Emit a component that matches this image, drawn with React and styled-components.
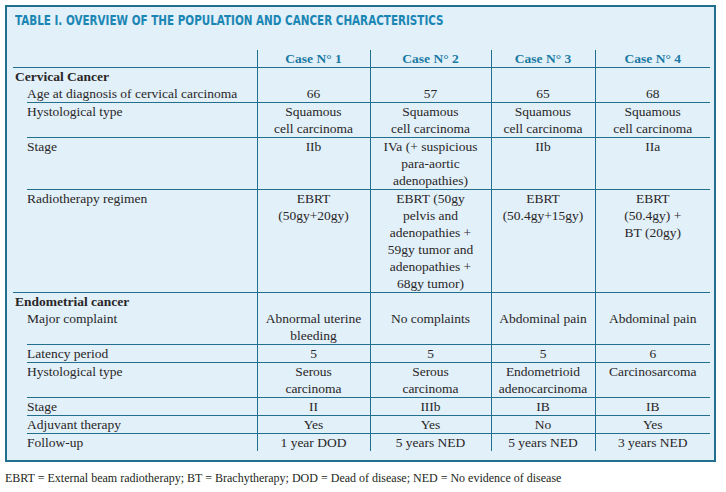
import React from "react";
import styled, { createGlobalStyle, css } from "styled-components";

const LINE = "#22708e";

const GlobalStyle = createGlobalStyle`
  html, body {
    margin: 0;
    padding: 0;
    background: #ffffff;
  }
  body {
    font-family: "Liberation Serif", "DejaVu Serif", serif;
    color: #2a2627;
  }
`;

const Panel = styled.div`
  margin: 5px 0 0 5px;
  width: 711px;
  height: 457px;
  box-sizing: border-box;
  border: 2px solid ${LINE};
  background: #e1f0f9;
  padding: 5px 4px 0 6px;
`;

const Title = styled.h1`
  margin: 0;
  height: 38px;
  padding-left: 2px;
  font-family: "DejaVu Sans Condensed", "Liberation Sans", sans-serif;
  font-weight: 700;
  font-size: 14px;
  line-height: 16px;
  color: #1b86b4;
  white-space: nowrap;

  span {
    display: inline-block;
    transform: scaleX(0.825);
    transform-origin: 0 50%;
  }
`;

const Table = styled.table`
  border-collapse: collapse;
  table-layout: fixed;
  width: 697px;
  font-size: 13.5px;
  line-height: 17px;

  td, th {
    padding: 0;
    vertical-align: top;
  }
`;

const HeadCell = styled.th`
  text-align: center;
  font-weight: 700;
  color: #1b7aa3;
  border-left: 1px solid ${LINE};
  border-bottom: 1px solid ${LINE};
  height: 17px;
`;

const Corner = styled.th`
  border-bottom: 1px solid ${LINE};
`;

const Label = styled.td`
  text-align: left;
  white-space: nowrap;
  padding-left: ${(p) => (p.$section ? "2px" : "14px")} !important;
  ${(p) => p.$section && css`
    font-weight: 700;
    color: #2a2627;
  `}
  ${(p) => p.$line === "indent" && css`
    background: linear-gradient(${LINE}, ${LINE}) no-repeat 14px 100% / calc(100% - 14px) 1px;
  `}
`;

const Value = styled.td`
  text-align: center;
  white-space: nowrap;
  border-left: 1px solid ${LINE};
  border-bottom: ${(p) => (p.$line ? `1px solid ${LINE}` : "none")};
`;

const Divider = styled.td`
  height: 0;
  border-top: 1px solid ${LINE};
`;

const Line = styled.span`
  display: block;
`;

const Footnote = styled.p`
  margin: 8px 0 0 5px;
  font-size: 12px;
  line-height: 16px;
  color: #231f20;
`;

const cervical = [
  { label: "Age at diagnosis of cervical carcinoma", values: ["66", "57", "65", "68"] },
  {
    label: "Hystological type",
    values: [
      ["Squamous", "cell carcinoma"],
      ["Squamous", "cell carcinoma"],
      ["Squamous", "cell carcinoma"],
      ["Squamous", "cell carcinoma"],
    ],
  },
  {
    label: "Stage",
    values: ["IIb", ["IVa (+ suspicious", "para-aortic", "adenopathies)"], "IIb", "IIa"],
  },
  {
    label: "Radiotherapy regimen",
    values: [
      ["EBRT", "(50gy+20gy)"],
      ["EBRT (50gy", "pelvis and", "adenopathies +", "59gy tumor and", "adenopathies +", "68gy tumor)"],
      ["EBRT", "(50.4gy+15gy)"],
      ["EBRT", "(50.4gy) +", "BT (20gy)"],
    ],
  },
];

const endometrial = [
  {
    label: "Major complaint",
    values: [["Abnormal uterine", "bleeding"], "No complaints", "Abdominal pain", "Abdominal pain"],
  },
  { label: "Latency period", values: ["5", "5", "5", "6"] },
  {
    label: "Hystological type",
    values: [
      ["Serous", "carcinoma"],
      ["Serous", "carcinoma"],
      ["Endometrioid", "adenocarcinoma"],
      "Carcinosarcoma",
    ],
  },
  { label: "Stage", values: ["II", "IIIb", "IB", "IB"] },
  { label: "Adjuvant therapy", values: ["Yes", "Yes", "No", "Yes"] },
  { label: "Follow-up", values: ["1 year DOD", "5 years NED", "5 years NED", "3 years NED"] },
];

function Text({ value }) {
  if (Array.isArray(value)) {
    return value.map((l, i) => <Line key={i}>{l}</Line>);
  }
  return value;
}

function Section({ title, rows }) {
  return (
    <>
      <tr>
        <Label $section>{title}</Label>
        {[0, 1, 2, 3].map((i) => (
          <Value key={i} />
        ))}
      </tr>
      {rows.map((row, r) => {
        const last = r === rows.length - 1;
        return (
          <tr key={row.label}>
            <Label $line={last ? null : "indent"}>{row.label}</Label>
            {row.values.map((v, i) => (
              <Value key={i} $line={!last}>
                <Text value={v} />
              </Value>
            ))}
          </tr>
        );
      })}
    </>
  );
}

export default function App() {
  return (
    <>
      <GlobalStyle />
      <Panel>
        <Title>
          <span>TABLE I. OVERVIEW OF THE POPULATION AND CANCER CHARACTERISTICS</span>
        </Title>
        <Table>
          <colgroup>
            <col style={{ width: 244 }} />
            <col style={{ width: 113 }} />
            <col style={{ width: 121 }} />
            <col style={{ width: 104 }} />
            <col style={{ width: 115 }} />
          </colgroup>
          <thead>
            <tr>
              <Corner />
              <HeadCell>Case N° 1</HeadCell>
              <HeadCell>Case N° 2</HeadCell>
              <HeadCell>Case N° 3</HeadCell>
              <HeadCell>Case N° 4</HeadCell>
            </tr>
          </thead>
          <tbody>
            <Section title="Cervical Cancer" rows={cervical} />
            <tr>
              <Divider colSpan={5} />
            </tr>
            <Section title="Endometrial cancer" rows={endometrial} />
          </tbody>
        </Table>
      </Panel>
      <Footnote>
        EBRT = External beam radiotherapy; BT = Brachytherapy; DOD = Dead of disease; NED = No evidence of disease
      </Footnote>
    </>
  );
}
